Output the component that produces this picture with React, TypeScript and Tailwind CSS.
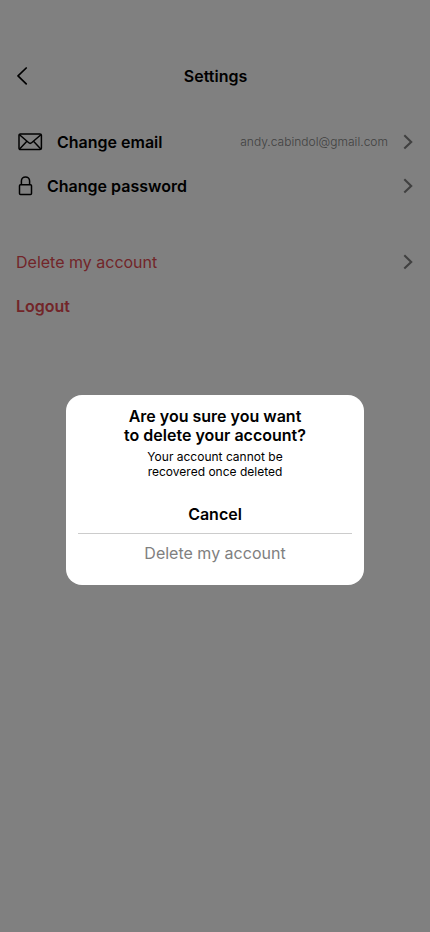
import React from "react";

function Chevron() {
  return (
    <svg width="10" height="16" viewBox="0 0 10 16" fill="none" stroke="#404040" strokeWidth="2.1">
      <path d="M1.3 1.3L8.2 7.9L1.3 14.5" />
    </svg>
  );
}

export default function App() {
  return (
    <div className="relative h-[932px] w-[430px] overflow-hidden bg-[#808080] font-['Inter',sans-serif] text-base leading-[19px] text-black">
      <header className="flex h-[38px] mt-[57px] items-center px-4">
        <svg width="12" height="18" viewBox="0 0 12 18" fill="none" stroke="#000" strokeWidth="1.7" strokeLinecap="round" strokeLinejoin="round">
          <path d="M10.2 1L2 8.9L10.2 16.8" />
        </svg>
        <h1 className="flex-1 pr-[11px] text-center font-semibold">Settings</h1>
      </header>
      <main className="pl-4 pr-[17px] pt-[25px]">
        <div className="flex h-11 items-center">
          <svg className="ml-0.5" width="25" height="18" viewBox="0 0 25 18" fill="none" stroke="#000" strokeWidth="1.5" strokeLinejoin="round">
            <rect x="1" y="0.9" width="22.4" height="15.7" rx="1.4" />
            <path d="M1.5 1.7L10.8 9.8Q12.2 11 13.6 9.8L22.9 1.7M1.6 15.9L8.9 8.3M22.8 15.9L15.5 8.3" />
          </svg>
          <span className="ml-[14px] font-semibold">Change email</span>
          <span className="ml-auto mr-[15px] text-xs font-light tracking-[0.02px] text-[#404040]">andy.cabindol@gmail.com</span>
          <Chevron />
        </div>
        <div className="flex h-11 items-center">
          <svg className="ml-0.5" width="15" height="20" viewBox="0 0 15 20" fill="none" stroke="#000" strokeWidth="1.5">
            <rect x="1.5" y="8.7" width="12" height="9.8" rx="1" />
            <path d="M3.4 8.7V5a4.1 4.1 0 0 1 8.2 0V8.7" />
          </svg>
          <span className="ml-[14px] font-semibold">Change password</span>
          <span className="ml-auto"><Chevron /></span>
        </div>
        <div className="mt-8 flex h-11 items-center justify-between text-[#722529]">
          <span>Delete my account</span>
          <Chevron />
        </div>
        <div className="flex h-11 items-center font-semibold text-[#722529]">Logout</div>
      </main>
      <div className="absolute left-[66px] top-[395px] h-[190px] w-[298px] rounded-[16px] bg-white px-3 pt-3 text-center">
        <h2 className="font-semibold">Are you sure you want<br />to delete your account?</h2>
        <p className="mt-1 text-xs leading-[15px]">Your account cannot be<br />recovered once deleted</p>
        <button className="mt-4 flex h-[39px] w-full items-center justify-center border-b border-[#ccc] font-semibold">Cancel</button>
        <button className="flex h-[39px] w-full items-center justify-center text-[#808080]">Delete my account</button>
      </div>
    </div>
  );
}
